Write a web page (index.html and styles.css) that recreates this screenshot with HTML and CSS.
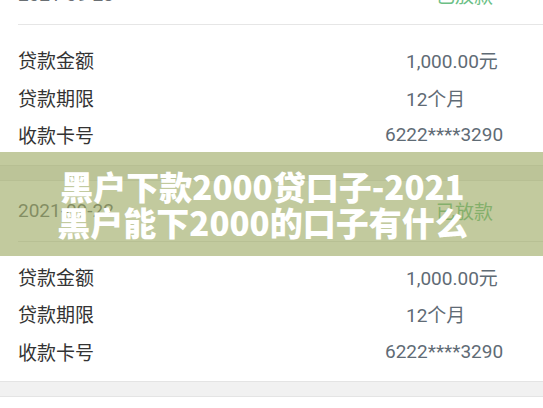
FILE: index.html
```html
<!DOCTYPE html>
<html lang="zh-CN">
<head>
  <meta charset="UTF-8">
  <meta name="viewport" content="width=device-width, initial-scale=1.0">
  <title>黑户下款2000贷口子</title>
  <link rel="stylesheet" href="styles.css">
</head>
<body>
  <div class="list">
    <!-- 第一笔 -->
    <div class="card">
      <div class="card-head">
        <span class="date">2021-09-23</span>
        <span class="status">已放款</span>
      </div>
      <div class="card-body">
        <div class="row"><span class="label">贷款金额</span><span class="value">1,000.00元</span></div>
        <div class="row"><span class="label">贷款期限</span><span class="value">12个月</span></div>
        <div class="row"><span class="label">收款卡号</span><span class="value value-wide">6222****3290</span></div>
      </div>
    </div>
    <div class="gap"></div>

    <!-- 第二笔 -->
    <div class="card">
      <div class="card-head">
        <span class="date">2021-09-22</span>
        <span class="status">已放款</span>
      </div>
      <div class="card-body">
        <div class="row"><span class="label">贷款金额</span><span class="value">1,000.00元</span></div>
        <div class="row"><span class="label">贷款期限</span><span class="value">12个月</span></div>
        <div class="row"><span class="label">收款卡号</span><span class="value value-wide">6222****3290</span></div>
      </div>
    </div>
    <div class="gap"></div>
    <div class="card"></div>
  </div>

  <!-- 标题横幅 -->
  <div class="banner">
    <h1>黑户下款2000贷口子-2021<br>黑户能下2000的口子有什么</h1>
  </div>
</body>
</html>
```

FILE: styles.css
```css
body {
  margin: 0;
  font-family: Roboto, "Noto Sans CJK SC", sans-serif;
  background-color: #fff;
  overflow: hidden;
}
.list {
  margin-top: -36px;
}
.card {
  background-color: #fff;
}
.card-head {
  margin-left: 18px;
  padding-right: 50px;
  height: 60px;
  display: flex;
  justify-content: space-between;
  align-items: center;
  border-bottom: 1px solid #e6e6e6;
  font-size: 19px;
}
.date {
  color: #6a6f73;
}
.status {
  color: #6cbf86;
}
.card-body {
  padding: 16px 0 11px;
}
.row {
  display: grid;
  grid-template-columns: 406px 1fr;
  height: 37.5px;
  align-items: center;
  font-size: 19px;
}
.label {
  padding-left: 18px;
  color: #333;
}
.value {
  color: #5f6b75;
}
.value-wide {
  margin-left: -21px;
}
.gap {
  height: 14px;
  background-color: #f1f1f1;
  border-top: 1px solid #e4e4e4;
  border-bottom: 1px solid #e4e4e4;
}

/* 标题横幅 */
.banner {
  position: absolute;
  left: 0;
  right: 0;
  top: 152px;
  height: 104px;
  background-color: rgba(150, 164, 88, 0.58);
  display: flex;
  align-items: center;
  justify-content: center;
}
.banner h1 {
  margin: 0;
  padding-right: 18px;
  font-family: "Noto Sans CJK SC", sans-serif;
  font-weight: 900;
  font-size: 33px;
  line-height: 36px;
  color: #fff;
  text-align: center;
}
```
